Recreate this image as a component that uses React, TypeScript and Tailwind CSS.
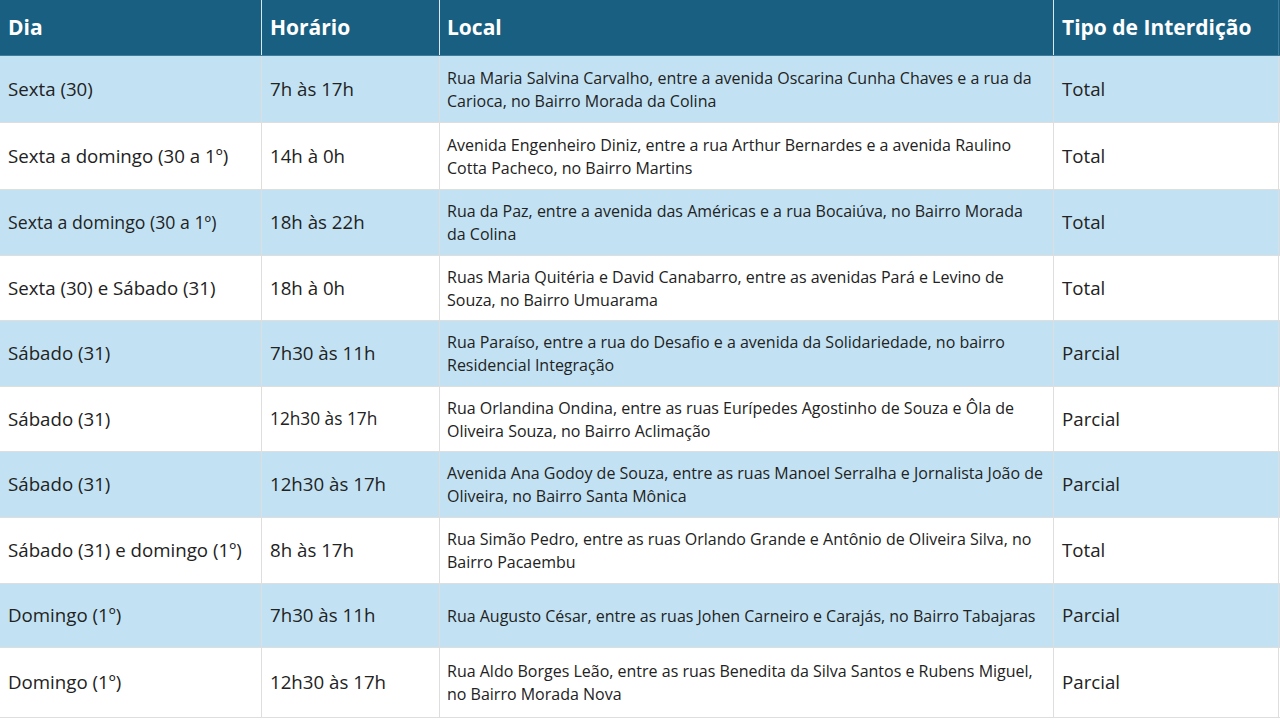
import React from "react";

type Row = {
  dia: string;
  hora: string;
  local: string[];
  tipo: string;
  h: number;
  blue: boolean;
  diaSize?: string;
  horaSize?: string;
};

const rows: Row[] = [
  { dia: "Sexta (30)", hora: "7h às 17h", local: ["Rua Maria Salvina Carvalho, entre a avenida Oscarina Cunha Chaves e a rua da", "Carioca, no Bairro Morada da Colina"], tipo: "Total", h: 67, blue: true },
  { dia: "Sexta a domingo (30 a 1º)", hora: "14h à 0h", local: ["Avenida Engenheiro Diniz, entre a rua Arthur Bernardes e a avenida Raulino", "Cotta Pacheco, no Bairro Martins"], tipo: "Total", h: 67, blue: false },
  { dia: "Sexta a domingo (30 a 1º)", hora: "18h às 22h", local: ["Rua da Paz, entre a avenida das Américas e a rua Bocaiúva, no Bairro Morada", "da Colina"], tipo: "Total", h: 66, blue: true, diaSize: "text-[17.7px]" },
  { dia: "Sexta (30) e Sábado (31)", hora: "18h à 0h", local: ["Ruas Maria Quitéria e David Canabarro, entre as avenidas Pará e Levino de", "Souza, no Bairro Umuarama"], tipo: "Total", h: 65, blue: false },
  { dia: "Sábado (31)", hora: "7h30 às 11h", local: ["Rua Paraíso, entre a rua do Desafio e a avenida da Solidariedade, no bairro", "Residencial Integração"], tipo: "Parcial", h: 66, blue: true },
  { dia: "Sábado (31)", hora: "12h30 às 17h", local: ["Rua Orlandina Ondina, entre as ruas Eurípedes Agostinho de Souza e Ôla de", "Oliveira Souza, no Bairro Aclimação"], tipo: "Parcial", h: 65, blue: false, horaSize: "text-[17.3px]" },
  { dia: "Sábado (31)", hora: "12h30 às 17h", local: ["Avenida Ana Godoy de Souza, entre as ruas Manoel Serralha e Jornalista João de", "Oliveira, no Bairro Santa Mônica"], tipo: "Parcial", h: 66, blue: true },
  { dia: "Sábado (31) e domingo (1º)", hora: "8h às 17h", local: ["Rua Simão Pedro, entre as ruas Orlando Grande e Antônio de Oliveira Silva, no", "Bairro Pacaembu"], tipo: "Total", h: 66, blue: false },
  { dia: "Domingo (1º)", hora: "7h30 às 11h", local: ["Rua Augusto César, entre as ruas Johen Carneiro e Carajás, no Bairro Tabajaras"], tipo: "Parcial", h: 64, blue: true },
  { dia: "Domingo (1º)", hora: "12h30 às 17h", local: ["Rua Aldo Borges Leão, entre as ruas Benedita da Silva Santos e Rubens Miguel,", "no Bairro Morada Nova"], tipo: "Parcial", h: 70, blue: false },
];

export default function App() {
  return (
    <div
      className="w-[1280px] h-[720px] bg-white text-[#222222] overflow-hidden"
      style={{ fontFamily: '"Open Sans", "Noto Sans", sans-serif' }}
    >
      <div className="flex h-[56px] bg-[#195f81] text-white font-bold text-[21px] border-b border-[#3f7d9b]">
        <div className="w-[261px] flex items-center pl-[8px]">Dia</div>
        <div className="w-[178px] flex items-center pl-[8px] border-l border-[#dce8ef]">Horário</div>
        <div className="w-[614px] flex items-center pl-[7px] border-l border-[#dce8ef]">Local</div>
        <div className="w-[226px] flex items-center pl-[8px] border-l border-[#dce8ef] border-r border-r-[#3f7d9b]">Tipo de Interdição</div>
      </div>
      {rows.map((r, i) => (
        <div
          key={i}
          className={`flex border-b border-[#dedede] ${r.blue ? "bg-[#c2e2f4]" : "bg-white"}`}
          style={{ height: r.h }}
        >
          <div className={`w-[261px] flex items-center pl-[8px] ${r.diaSize ?? "text-[18.7px]"}`}>{r.dia}</div>
          <div className={`w-[178px] flex items-center pl-[8px] border-l border-[#dedede] ${r.horaSize ?? "text-[18.7px]"}`}>{r.hora}</div>
          <div className="w-[614px] flex flex-col justify-center pl-[7px] pt-[1px] border-l border-[#dedede] text-[16px] leading-[23px]">
            {r.local.map((l, j) => (
              <span key={j} className="whitespace-nowrap">{l}</span>
            ))}
          </div>
          <div className="w-[226px] flex items-center pl-[8px] border-l border-[#dedede] border-r text-[18.7px]">{r.tipo}</div>
        </div>
      ))}
    </div>
  );
}
